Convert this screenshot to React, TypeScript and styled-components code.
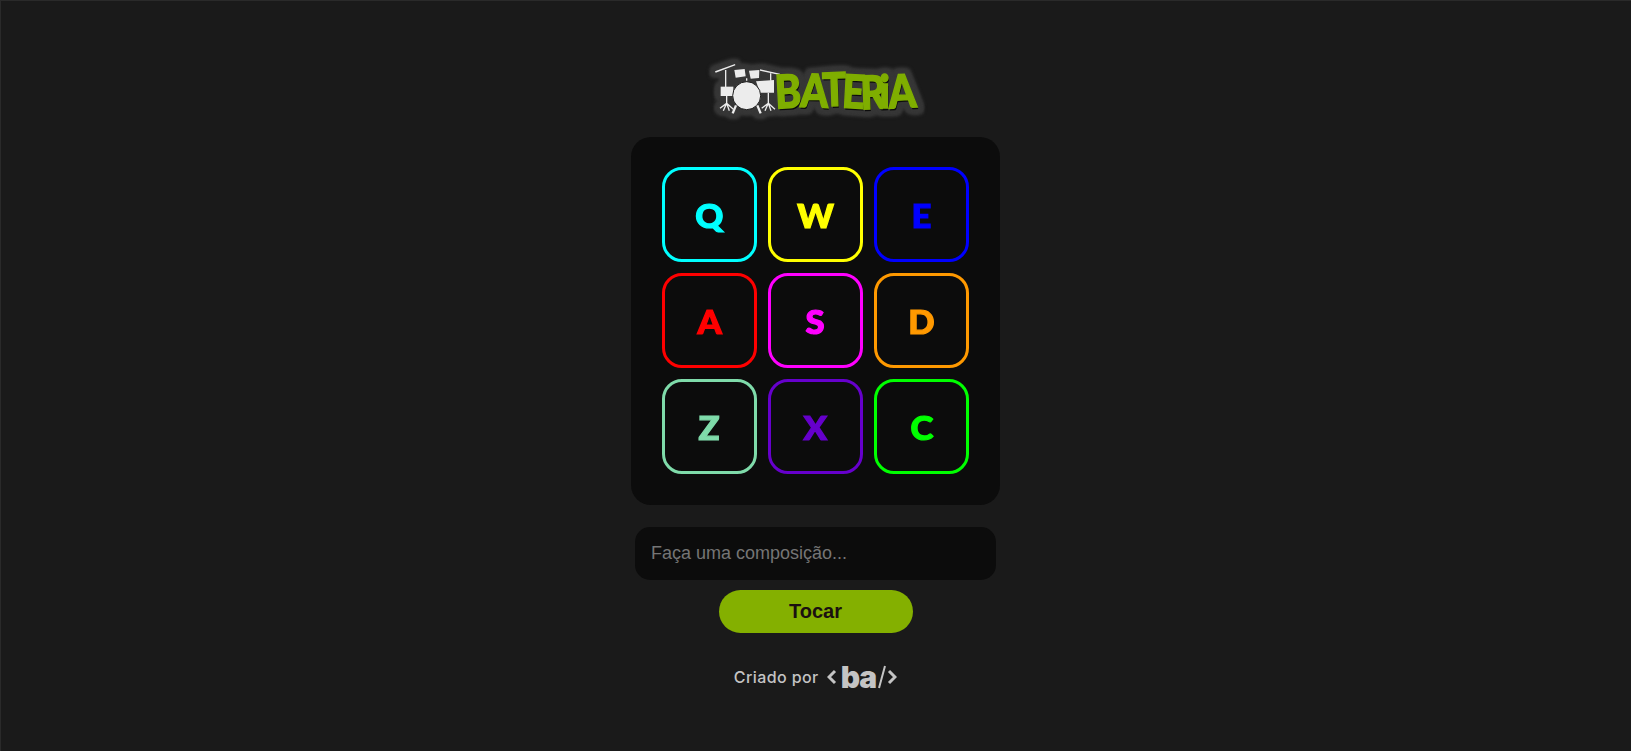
import styled, { createGlobalStyle } from "styled-components";

const GlobalStyle = createGlobalStyle`
  * {
    box-sizing: border-box;
  }
  html,
  body {
    margin: 0;
    padding: 0;
    background: #1a1a1a;
  }
`;

const Page = styled.main`
  min-height: 751px;
  padding-top: 50px;
  display: flex;
  flex-direction: column;
  align-items: center;
  box-shadow: inset 1px 1px 0 #2a2a2a;
  font-family: "Liberation Sans", Arial, sans-serif;
`;

const Logo = styled.div`
  height: 80px;
  margin-bottom: 7px;
  display: flex;
  align-items: center;
  filter: drop-shadow(2px 0 0 #363636) drop-shadow(-2px 0 0 #363636)
    drop-shadow(0 2px 0 #363636) drop-shadow(0 -2px 0 #363636)
    drop-shadow(3px 0 1px #363636) drop-shadow(-3px 0 1px #363636)
    drop-shadow(0 3px 1px #363636) drop-shadow(0 -3px 1px #363636);
`;

const LogoText = styled.div`
  display: flex;
  margin-left: -17px;
  margin-right: 23px;
  font-family: "Lato", "Noto Sans", sans-serif;
  font-size: 46px;
  font-weight: 900;
  line-height: 1;
  color: #7fae00;
  -webkit-text-stroke: 1.5px #7fae00;
  text-shadow: 1px 2px 0 #0c0c0c;
`;

const LogoLetter = styled.span<{ $tilt: number; $drop: number; $squeeze: number }>`
  display: block;
  width: ${(p) => p.$squeeze}px;
  text-align: center;
  transform: translateY(${(p) => p.$drop}px) rotate(${(p) => p.$tilt}deg)
    scaleX(0.86);
`;

const Panel = styled.section`
  width: 369px;
  padding: 30px 31px 31px;
  background: #0c0c0c;
  border-radius: 20px;
  display: grid;
  grid-template-columns: repeat(3, 95px);
  gap: 11px;
`;

const Key = styled.div<{ $color: string }>`
  height: 95px;
  display: flex;
  align-items: center;
  justify-content: center;
  border: 3px solid ${(p) => p.$color};
  border-radius: 20px;
  color: ${(p) => p.$color};
  font-family: "Lato", sans-serif;
  font-size: 33px;
  font-weight: 900;
`;

const KeyLabel = styled.span`
  display: block;
  transform: scaleX(1.05);
  -webkit-text-stroke: 1.2px currentColor;
`;

const Composer = styled.input`
  width: 361px;
  height: 53px;
  margin-top: 22px;
  padding: 0 16px;
  border: none;
  border-radius: 15px;
  outline: none;
  background: #0c0c0c;
  color: #fff;
  font-family: inherit;
  font-size: 18px;
  &::placeholder {
    color: #757575;
  }
`;

const PlayButton = styled.button`
  width: 194px;
  height: 43px;
  margin-top: 10px;
  border: none;
  border-radius: 22px;
  background: #84b000;
  color: #1a1010;
  font-family: inherit;
  font-size: 20px;
  font-weight: 700;
`;

const Credit = styled.footer`
  margin-top: 29px;
  display: flex;
  align-items: center;
  gap: 8px;
  color: #c4c4c4;
  font-family: "Inter", sans-serif;
  font-size: 16px;
  font-weight: 500;
  letter-spacing: 0.4px;
`;

const Brand = styled.span`
  display: flex;
  align-items: center;
  gap: 1px;
  color: #c4c4c4;
  font-size: 30px;
  font-weight: 900;
  letter-spacing: -1px;
  line-height: 1;
`;

const BrandName = styled.span`
  margin: 0 1px 0 3px;
`;

const KEYS = [
  { label: "Q", color: "#00ffff" },
  { label: "W", color: "#ffff00" },
  { label: "E", color: "#0000ff" },
  { label: "A", color: "#ff0000" },
  { label: "S", color: "#ff00ff" },
  { label: "D", color: "#ff9900" },
  { label: "Z", color: "#7fdbaa" },
  { label: "X", color: "#6600cc" },
  { label: "C", color: "#00ff00" },
];

const LOGO_LETTERS = [
  { char: "B", tilt: -3, drop: 1, width: 26 },
  { char: "A", tilt: 2, drop: 0, width: 22 },
  { char: "T", tilt: -2, drop: -1, width: 20 },
  { char: "E", tilt: 3, drop: 1, width: 18 },
  { char: "R", tilt: -2, drop: 2, width: 20 },
  { char: "i", tilt: 0, drop: 1, width: 8 },
  { char: "A", tilt: -3, drop: 1, width: 21 },
];

// coordinates follow a 3x crop of the reference logo
const DrumKit = () => (
  <svg width="90" height="80" viewBox="0 0 270 240">
    <g fill="#ececec">
      <path d="M45 64 L105 42 L106 46 L47 68 Z" />
      <path d="M180 58 L240 71 L239 75 L180 62 Z" />
      <path d="M103 60 L134 57 L137 79 L107 83 Z" />
      <path d="M147 62 L178 60 L177 84 L152 86 Z" />
      <rect x="62" y="110" width="38" height="28" />
      <path d="M168 94 L222 90 L222 128 L180 128 Z" />
      <circle cx="140" cy="137" r="42" stroke="#1d1d1d" strokeWidth="3" />
    </g>
    <g fill="none" stroke="#ececec" strokeWidth="4">
      <path d="M77 60 V112 M212 70 V92" />
      <path d="M80 138 V160 L60 175 M80 160 L70 182 M80 160 L88 182 M80 160 L100 178" />
      <path d="M205 128 V160 L185 175 M205 160 L195 182 M205 160 L213 182 M205 160 L225 178" />
      <path d="M108 166 L98 190 M172 166 L182 190" strokeWidth="7" />
      <path d="M140 85 V92" />
    </g>
  </svg>
);

const Chevron = ({ flip }: { flip?: boolean }) => (
  <svg width="10" height="16" viewBox="0 0 10 16">
    <path
      d={flip ? "M2 2 L8 8 L2 14" : "M8 2 L2 8 L8 14"}
      fill="none"
      stroke="#c4c4c4"
      strokeWidth="3"
    />
  </svg>
);

const App = () => (
  <>
    <GlobalStyle />
    <Page>
      <Logo>
        <DrumKit />
        <LogoText>
          {LOGO_LETTERS.map((letter, index) => (
            <LogoLetter
              key={index}
              $tilt={letter.tilt}
              $drop={letter.drop}
              $squeeze={letter.width}
            >
              {letter.char}
            </LogoLetter>
          ))}
        </LogoText>
      </Logo>
      <Panel>
        {KEYS.map((key) => (
          <Key key={key.label} $color={key.color}>
            <KeyLabel>{key.label}</KeyLabel>
          </Key>
        ))}
      </Panel>
      <Composer placeholder="Faça uma composição..." />
      <PlayButton>Tocar</PlayButton>
      <Credit>
        Criado por
        <Brand>
          <Chevron />
          <BrandName>ba</BrandName>
          <svg width="8" height="24" viewBox="0 0 8 24">
            <path d="M7 1 L1 23" stroke="#c4c4c4" strokeWidth="2" />
          </svg>
          <Chevron flip />
        </Brand>
      </Credit>
    </Page>
  </>
);

export default App;
